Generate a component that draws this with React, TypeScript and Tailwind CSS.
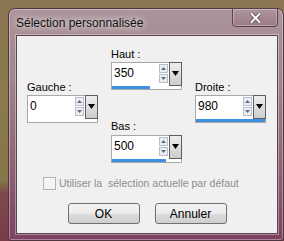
import React from 'react';

const font = "font-['Liberation_Sans',Arial,sans-serif]";

const SpinField = ({ label, value, bar, gap = 'mt-[2px]' }: { label: string; value: string; bar: number; gap?: string }) => (
  <div className="flex flex-col">
    <div className="h-[12px] leading-[12px] text-[11px] text-black whitespace-pre">{label}</div>
    <div className={`${gap} relative w-[71px] h-[28px] border border-[#a8a8a8] bg-white flex flex-col`}>
      <div className="flex h-[22px]">
        <div className="flex-1 pl-[2px] pt-[4px] text-[12px] leading-[12px] text-black">{value}</div>
        {/* spinner */}
        <div className="mt-[1px] mr-[1px] w-[9px] flex flex-col gap-[1px]">
          <div className="h-[9px] border border-[#b9bccb] bg-[#eceef4] flex items-center justify-center">
            <svg width="5" height="3" viewBox="0 0 5 3"><path d="M2.5 0 L5 3 L0 3 Z" fill="#5b6a8a" /></svg>
          </div>
          <div className="h-[9px] border border-[#b9bccb] bg-[#eceef4] flex items-center justify-center">
            <svg width="5" height="3" viewBox="0 0 5 3"><path d="M0 0 L5 0 L2.5 3 Z" fill="#5b6a8a" /></svg>
          </div>
        </div>
        {/* dropdown */}
        <div className="-mt-px -mr-px w-[13px] h-[24px] border border-[#5e5e5e] bg-[linear-gradient(#eeeeee,#cdcdcd)] flex justify-center pt-[8px]">
          <svg width="7" height="5" viewBox="0 0 7 5"><path d="M0 0 L7 0 L3.5 5 Z" fill="#000" /></svg>
        </div>
      </div>
      <div className="mt-auto h-[3px] bg-[#3d8fe2]" style={{ width: bar }} />
    </div>
  </div>
);

export default function App() {
  return (
    <div className={`${font} w-[284px] h-[241px] overflow-hidden pt-[8px] pl-[8px] bg-[linear-gradient(180deg,#8a7550_0%,#8a7a4e_40%,#857547_75%,#7d4a4c_80%,#7a3b4b_100%)]`}>
      {/* window */}
      <div className="w-[276px] h-[233px] rounded-t-[7px] rounded-b-[3px] border border-[#4f3640] bg-[linear-gradient(180deg,#ab949a_0%,#a0868d_30%,#936a79_60%,#86506a_85%,#7d4260_100%)] shadow-[inset_0_0_0_1px_rgba(255,255,255,0.35)] flex flex-col pl-[7px] pr-[5px] pb-[6px]">
        {/* title bar */}
        <div className="h-[26px] flex items-start">
          <div className="pt-[7px] text-[12px] leading-[14px] text-[#111] [text-shadow:0_0_6px_rgba(255,255,255,0.9),0_0_10px_rgba(255,255,255,0.6)]">
            Sélection personnalisée
          </div>
          <div className="ml-auto -mt-px w-[46px] h-[19px] rounded-b-[4px] border border-[#5a3e48] bg-[linear-gradient(180deg,#b0959c,#9a7b85)] shadow-[inset_0_0_0_1px_rgba(255,255,255,0.3)] flex items-center justify-center">
            <svg width="11" height="10" viewBox="0 0 11 10">
              <path d="M1.5 1 L9.5 9 M9.5 1 L1.5 9" stroke="#4a3a40" strokeWidth="3.4" strokeLinecap="square" />
              <path d="M1.5 1 L9.5 9 M9.5 1 L1.5 9" stroke="#ffffff" strokeWidth="2" strokeLinecap="square" />
            </svg>
          </div>
        </div>
        {/* client area */}
        <div className="flex-1 border border-[#5c4350] bg-[#f0f0f0] shadow-[0_0_0_1px_rgba(255,255,255,0.35)] flex flex-col">
          <div className="flex pl-[10px] gap-[13px]">
            <div className="pt-[45px]">
              <SpinField label="Gauche :" value="0" bar={0} />
            </div>
            <div className="pt-[12px] flex flex-col">
              <SpinField label="Haut :" value="350" bar={38} />
              <div className="mt-[30px]">
                <SpinField label="Bas :" value="500" bar={54} gap="mt-[3px]" />
              </div>
            </div>
            <div className="pt-[45px]">
              <SpinField label="Droite :" value="980" bar={69} />
            </div>
          </div>
          <div className="mt-[14px] pl-[26px] flex items-center gap-[3px] h-[13px]">
            <div className="w-[13px] h-[13px] border border-[#b4b4b4] bg-[#f4f4f4]" />
            <span className="text-[10.5px] leading-[13px] text-[#8d8d8d] whitespace-pre">Utiliser la  sélection actuelle par défaut</span>
          </div>
          <div className="mt-[13px] flex justify-center gap-[15px]">
            <button className="w-[72px] h-[21px] rounded-[3px] border border-[#707070] bg-[linear-gradient(180deg,#f3f3f3_0%,#ebebeb_50%,#dddddd_51%,#cfcfcf_100%)] text-[12px] leading-[12px] text-black">OK</button>
            <button className="w-[72px] h-[21px] rounded-[3px] border border-[#707070] bg-[linear-gradient(180deg,#f3f3f3_0%,#ebebeb_50%,#dddddd_51%,#cfcfcf_100%)] text-[12px] leading-[12px] text-black">Annuler</button>
          </div>
        </div>
      </div>
    </div>
  );
}
